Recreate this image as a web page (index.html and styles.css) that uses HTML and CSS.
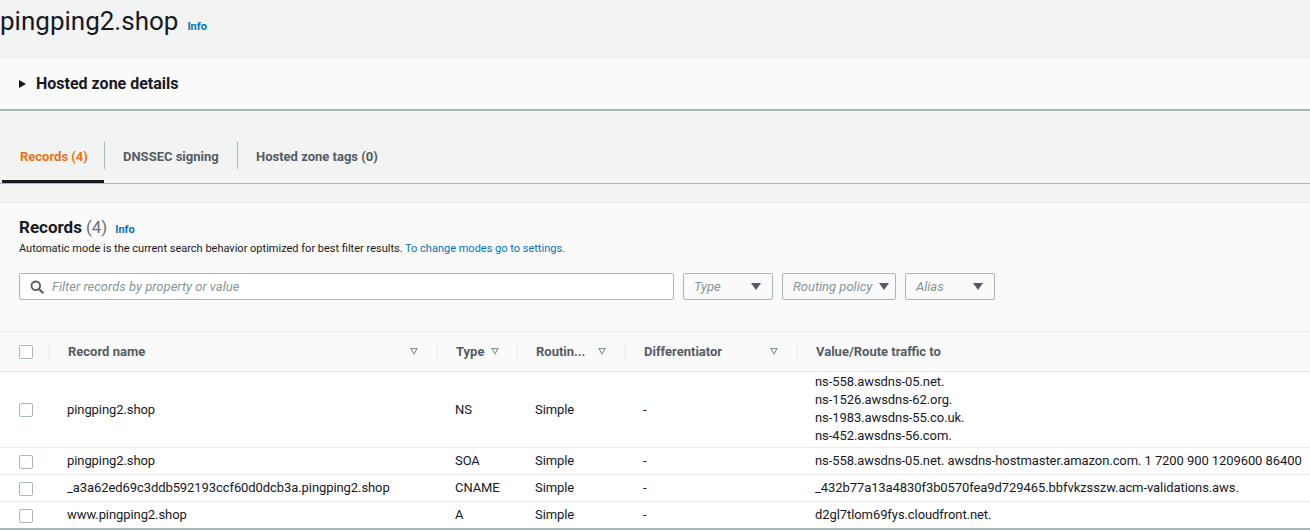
FILE: index.html
```html
<!DOCTYPE html>
<html>
<head>
<meta charset="utf-8">
<link rel="stylesheet" href="styles.css">
</head>
<body>
<div class="page">
  <header class="page-header">
    <h1 class="title">pingping2.shop</h1>
    <a class="info">Info</a>
  </header>

  <section class="details">
    <span class="caret"></span>
    <span class="details-label">Hosted zone details</span>
  </section>

  <nav class="tabs">
    <div class="tab active">Records (4)</div>
    <div class="tab">DNSSEC signing</div>
    <div class="tab">Hosted zone tags (0)</div>
  </nav>

  <section class="records">
    <div class="records-head">
      <div class="records-title"><span class="rt-main">Records</span> <span class="rt-count">(4)</span> <a class="info">Info</a></div>
      <p class="records-desc">Automatic mode is the current search behavior optimized for best filter results. <a class="link">To change modes go to settings.</a></p>
      <div class="filters">
        <div class="search">
          <svg class="search-icon" width="14" height="14" viewBox="0 0 14 14"><circle cx="5.8" cy="5.8" r="4.3" fill="none" stroke="#545b64" stroke-width="1.8"/><line x1="9" y1="9" x2="12.8" y2="12.8" stroke="#545b64" stroke-width="2" stroke-linecap="round"/></svg>
          <span class="placeholder">Filter records by property or value</span>
        </div>
        <div class="select sel-type"><span class="placeholder">Type</span><span class="tri"></span></div>
        <div class="select sel-routing"><span class="placeholder">Routing policy</span><span class="tri"></span></div>
        <div class="select sel-alias"><span class="placeholder">Alias</span><span class="tri"></span></div>
      </div>
    </div>

    <table class="grid">
      <colgroup>
        <col class="c-check"><col class="c-name"><col class="c-type"><col class="c-route"><col class="c-diff"><col class="c-val">
      </colgroup>
      <thead>
        <tr>
          <th><div class="th-first"><span class="cb"></span></div></th>
          <th><div class="th-in"><span>Record name</span><span class="sort"></span></div></th>
          <th><div class="th-in"><span>Type</span><span class="sort near"></span></div></th>
          <th><div class="th-in"><span>Routin...</span><span class="sort"></span></div></th>
          <th><div class="th-in"><span>Differentiator</span><span class="sort"></span></div></th>
          <th><div class="th-in"><span>Value/Route traffic to</span></div></th>
        </tr>
      </thead>
      <tbody>
        <tr>
          <td class="td-check"><span class="cb"></span></td>
          <td>pingping2.shop</td>
          <td>NS</td>
          <td>Simple</td>
          <td>-</td>
          <td class="val multi">ns-558.awsdns-05.net.<br>ns-1526.awsdns-62.org.<br>ns-1983.awsdns-55.co.uk.<br>ns-452.awsdns-56.com.</td>
        </tr>
        <tr>
          <td class="td-check"><span class="cb"></span></td>
          <td>pingping2.shop</td>
          <td>SOA</td>
          <td>Simple</td>
          <td>-</td>
          <td class="val">ns-558.awsdns-05.net. awsdns-hostmaster.amazon.com. 1 7200 900 1209600 86400</td>
        </tr>
        <tr>
          <td class="td-check"><span class="cb"></span></td>
          <td>_a3a62ed69c3ddb592193ccf60d0dcb3a.pingping2.shop</td>
          <td>CNAME</td>
          <td>Simple</td>
          <td>-</td>
          <td class="val">_432b77a13a4830f3b0570fea9d729465.bbfvkzsszw.acm-validations.aws.</td>
        </tr>
        <tr class="last">
          <td class="td-check"><span class="cb"></span></td>
          <td>www.pingping2.shop</td>
          <td>A</td>
          <td>Simple</td>
          <td>-</td>
          <td class="val">d2gl7tlom69fys.cloudfront.net.</td>
        </tr>
      </tbody>
    </table>
  </section>
</div>
</body>
</html>
```

FILE: styles.css
```css
* { box-sizing: border-box; }

html, body {
  margin: 0;
  padding: 0;
  background: #f2f3f3;
  font-family: Roboto, "Liberation Sans", Arial, sans-serif;
  color: #16191f;
}

.page {
  width: 1310px;
  height: 530px;
  overflow: hidden;
}

/* header */
.page-header {
  display: flex;
  align-items: baseline;
  height: 57px;
  padding-top: 3px;
}
.title {
  margin: 0;
  font-size: 26px;
  font-weight: 400;
  line-height: 36px;
  letter-spacing: 0;
}
.info {
  font-size: 11px;
  font-weight: 700;
  color: #0073bb;
  margin-left: 9px;
}

/* details panel */
.details {
  height: 54px;
  background: #fafafa;
  border-top: 1px solid #eaeded;
  border-bottom: 2px solid #aab7b8;
  display: flex;
  align-items: center;
  padding-left: 19px;
}
.caret {
  width: 0;
  height: 0;
  border-left: 7px solid #16191f;
  border-top: 4.5px solid transparent;
  border-bottom: 4.5px solid transparent;
  margin-right: 10px;
}
.details-label {
  font-size: 16px;
  font-weight: 700;
  color: #16191f;
}

/* tabs */
.tabs {
  display: flex;
  height: 73px;
  align-items: flex-end;
  border-bottom: 1px solid #aab7b8;
  padding-left: 2px;
  margin-bottom: 18px;
}
.tab {
  position: relative;
  height: 41px;
  padding: 7px 19px 0 19px;
  display: flex;
  align-items: flex-start;
  white-space: nowrap;
  font-size: 13px;
  font-weight: 700;
  color: #545b64;
}
.tab + .tab::before {
  content: "";
  position: absolute;
  left: 0;
  top: 0;
  height: 27px;
  border-left: 1px solid #aab7b8;
}
.tab.active {
  color: #ec7211;
  width: 102px;
  padding-left: 18px;
  border-bottom: 3px solid #16191f;
}
.tab:nth-child(2) { width: 133px; }

/* records container */
.records {
  background: #fafafa;
  border-top: 1px solid #eaeded;
  height: 400px;
}
.records-head {
  padding: 14px 19px 0 19px;
  height: 128px;
}
.records-title {
  display: flex;
  align-items: baseline;
  height: 24px;
}
.rt-main {
  font-size: 17px;
  font-weight: 700;
}
.rt-count {
  font-size: 17px;
  color: #687078;
  margin-left: 4px;
}
.records-title .info { margin-left: 8px; }
.records-desc {
  margin: 0;
  font-size: 11px;
  line-height: 16px;
  color: #16191f;
}
.link { color: #0073bb; }

.filters {
  display: flex;
  margin-top: 16px;
  gap: 9px;
}
.search {
  width: 655px;
  height: 27px;
  border: 1px solid #aab7b8;
  border-radius: 2px;
  background: #fff;
  display: flex;
  align-items: center;
  padding-left: 10px;
}
.search-icon { margin-right: 8px; }
.placeholder {
  font-style: italic;
  font-size: 13px;
  color: #879596;
}
.select {
  height: 27px;
  border: 1px solid #aab7b8;
  border-radius: 2px;
  background: #fafafa;
  display: flex;
  align-items: center;
  justify-content: space-between;
  padding: 0 11px 0 10px;
}
.sel-type { width: 90px; }
.sel-routing { width: 114px; padding-right: 6px; }
.sel-alias { width: 90px; }
.tri {
  width: 0;
  height: 0;
  border-top: 7px solid #545b64;
  border-left: 5.5px solid transparent;
  border-right: 5.5px solid transparent;
}

/* table */
.grid {
  width: 1310px;
  border-collapse: collapse;
  table-layout: fixed;
  font-size: 13px;
}
.c-check { width: 49px; }
.c-name { width: 388px; }
.c-type { width: 80px; }
.c-route { width: 108px; }
.c-diff { width: 172px; }
.c-val { width: 513px; }

.grid thead tr {
  height: 40px;
  background: #fafafa;
  border-top: 1px solid #eaeded;
  border-bottom: 1px solid #eaeded;
}
.grid th {
  padding: 0;
  text-align: left;
  font-weight: 700;
  color: #545b64;
}
.th-first {
  display: flex;
  align-items: center;
  padding-left: 19px;
}
.th-in {
  display: flex;
  align-items: center;
  justify-content: space-between;
  height: 22px;
  border-left: 1px solid #eaeded;
  padding-left: 18px;
  padding-right: 19px;
}
.th-in:has(.near) { justify-content: flex-start; }
.sort {
  width: 0;
  height: 0;
  border-top: 7px solid #879596;
  border-left: 4.5px solid transparent;
  border-right: 4.5px solid transparent;
  position: relative;
}
.sort::after {
  content: "";
  position: absolute;
  left: -2.5px;
  top: -6px;
  border-top: 4px solid #fafafa;
  border-left: 2.5px solid transparent;
  border-right: 2.5px solid transparent;
}
.sort.near { margin-left: 7px; }

.cb {
  display: inline-block;
  width: 14px;
  height: 14px;
  border: 1px solid #aab7b8;
  border-radius: 2px;
  background: #fff;
  vertical-align: middle;
}

.grid tbody tr {
  background: #fff;
  border-bottom: 1px solid #eaeded;
}
.grid tbody tr.last { border-bottom: 2px solid #aab7b8; }
.grid td {
  padding: 4px 0 4px 18px;
  line-height: 18px;
  color: #16191f;
  white-space: nowrap;
  overflow: visible;
  vertical-align: middle;
  letter-spacing: -0.08px;
}
.grid td.td-check { padding-left: 19px; }
.grid td.val { padding-left: 18px; }
.grid td.val.multi { padding-top: 1px; padding-bottom: 2px; }
```
